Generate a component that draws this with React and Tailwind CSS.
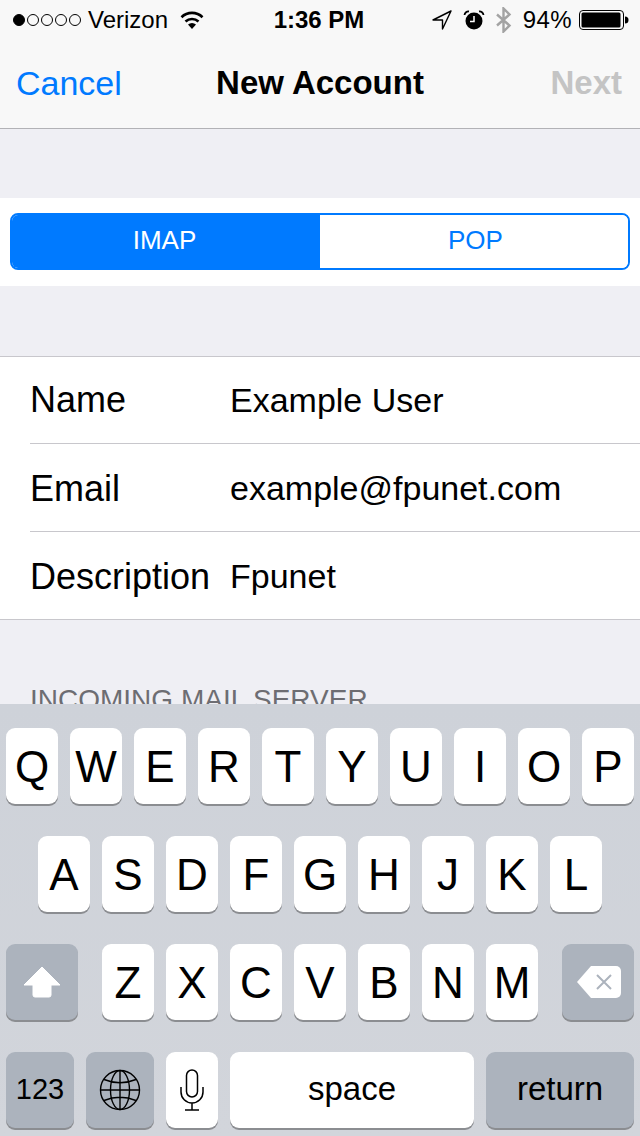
const row1 = ["Q", "W", "E", "R", "T", "Y", "U", "I", "O", "P"];
const row2 = ["A", "S", "D", "F", "G", "H", "J", "K", "L"];
const row3 = ["Z", "X", "C", "V", "B", "N", "M"];

const fields = [
  { label: "Name", value: "Example User", rowClass: "h-[87px] border-b border-[#c8c7cc]" },
  { label: "Email", value: "example@fpunet.com", rowClass: "h-[88px] pt-[2px] border-b border-[#c8c7cc]" },
  { label: "Description", value: "Fpunet", rowClass: "h-[87px] pt-[2px]" },
];

function Key({ children, dark, className = "" }) {
  return (
    <div
      className={`h-[76px] rounded-[9px] flex items-center justify-center text-black shadow-[0_2px_0_#8b8d91] ${dark ? "bg-[#acb3bd]" : "bg-white"} ${className}`}
    >
      {children}
    </div>
  );
}

function LetterKey({ letter }) {
  return (
    <Key className="w-[52px] pt-[2px] text-[44px] font-light leading-none">{letter}</Key>
  );
}

function StatusBar() {
  return (
    <div className="h-10 flex items-center text-[24px] leading-none text-black">
      <div className="flex-1 flex items-center pl-[13px]">
        <div className="flex gap-[2px]">
          <span className="w-[12px] h-[12px] rounded-full bg-black border border-black"></span>
          {[0, 1, 2, 3].map((i) => (
            <span key={i} className="w-[12px] h-[12px] rounded-full border border-black"></span>
          ))}
        </div>
        <span className="ml-[7px]">Verizon</span>
        <svg className="ml-[11px]" width="26" height="20" viewBox="0 0 26 20">
          <path d="M13 19 L9 14.6 A6 6 0 0 1 17 14.6 Z" fill="#000" />
          <path d="M6.5 11.5 A9.5 9.5 0 0 1 19.5 11.5" fill="none" stroke="#000" strokeWidth="2.6" />
          <path d="M2.5 7.2 A15 15 0 0 1 23.5 7.2" fill="none" stroke="#000" strokeWidth="2.6" />
        </svg>
      </div>
      <span className="font-bold mr-[4px]">1:36 PM</span>
      <div className="flex-1 flex items-center justify-end pr-[11px]">
        <svg width="20" height="20" viewBox="0 0 20 20">
          <path d="M19 1 L1 10 L10.5 10 L10.5 19 Z" fill="none" stroke="#000" strokeWidth="1.4" strokeLinejoin="round" />
        </svg>
        <svg className="ml-[11px]" width="22" height="20" viewBox="0 0 22 20">
          <circle cx="11" cy="11" r="8.5" fill="#000" />
          <path d="M11 6 V11.5 H7" fill="none" stroke="#fff" strokeWidth="1.5" />
          <path d="M1.5 5 A4 4 0 0 1 6 1.5 M20.5 5 A4 4 0 0 0 16 1.5" fill="none" stroke="#000" strokeWidth="1.8" />
        </svg>
        <svg className="ml-[10px]" width="17" height="26" viewBox="0 0 17 26">
          <path d="M2 7.5 L14.5 18.5 L8.5 24.5 V1.5 L14.5 7.5 L2 18.5" fill="none" stroke="#a3a3a3" strokeWidth="2.4" />
        </svg>
        <span className="ml-[11px] tracking-[0.4px] font-light">94%</span>
        <svg className="ml-[7px]" width="50" height="20" viewBox="0 0 50 20">
          <rect x="0.5" y="0.5" width="44" height="19" rx="3.5" fill="none" stroke="#000" />
          <rect x="2.5" y="2.5" width="39" height="15" rx="1.5" fill="#000" />
          <path d="M46 6.5 A3.5 3.5 0 0 1 46 13.5 Z" fill="#000" />
        </svg>
      </div>
    </div>
  );
}

function NavBar() {
  return (
    <div className="h-[89px] flex items-center justify-between pb-[3px] border-b border-[#b2b2b6] text-[34px] leading-none">
      <span className="w-[140px] pl-[16px] text-[#007aff]">Cancel</span>
      <span className="font-bold text-[33px] text-black">New Account</span>
      <span className="w-[140px] pr-[18px] text-right font-bold text-[33px] text-[#c4c4c4]">Next</span>
    </div>
  );
}

function Segments() {
  return (
    <div className="mt-[69px] h-[88px] bg-white pt-[15px] px-[10px]">
      <div className="w-full h-[57px] flex rounded-[8px] border-2 border-[#007aff] overflow-hidden text-[26px]">
        <div className="w-[308px] bg-[#007aff] text-white flex items-center justify-center pr-[3px] pb-[2px]">IMAP</div>
        <div className="flex-1 bg-white text-[#007aff] flex items-center justify-center pl-[3px] pb-[2px]">POP</div>
      </div>
    </div>
  );
}

function Fields() {
  return (
    <div className="mt-[70px] bg-white border-y border-[#c8c7cc]">
      {fields.map((f) => (
        <div key={f.label} className={`ml-[30px] flex items-center text-[34px] text-black ${f.rowClass}`}>
          <span className="w-[200px] text-[36px]">{f.label}</span>
          <span>{f.value}</span>
        </div>
      ))}
    </div>
  );
}

function Keyboard() {
  return (
    <div className="h-[432px] shrink-0 pt-6 px-[6px] flex flex-col gap-[32px] bg-gradient-to-b from-[#ced2d9] to-[#d2d5db]">
      <div className="flex gap-3">
        {row1.map((k) => <LetterKey key={k} letter={k} />)}
      </div>
      <div className="flex gap-3 justify-center">
        {row2.map((k) => <LetterKey key={k} letter={k} />)}
      </div>
      <div className="flex gap-3">
        <Key dark className="w-[72px] mr-3">
          <svg width="38" height="32" viewBox="0 0 38 32">
            <path d="M19 1 L37 19 H28 V29 A2 2 0 0 1 26 31 H12 A2 2 0 0 1 10 29 V19 H1 Z" fill="#fff" stroke="#fff" strokeLinejoin="round" />
          </svg>
        </Key>
        {row3.map((k) => <LetterKey key={k} letter={k} />)}
        <Key dark className="w-[72px] ml-3 pl-[1px]">
          <svg width="44" height="32" viewBox="0 0 44 32">
            <path d="M14 0 H39 A5 5 0 0 1 44 5 V27 A5 5 0 0 1 39 32 H14 L0 16 Z" fill="#fff" />
            <path d="M20 9 L34 23 M34 9 L20 23" stroke="#acb3bd" strokeWidth="2" />
          </svg>
        </Key>
      </div>
      <div className="flex gap-3">
        <Key dark className="w-[68px] text-[29px] font-light">123</Key>
        <Key dark className="w-[68px]">
          <svg width="42" height="42" viewBox="0 0 42 42" fill="none" stroke="#000" strokeWidth="1.4">
            <circle cx="21" cy="21" r="19.5" />
            <ellipse cx="21" cy="21" rx="9.5" ry="19.5" />
            <path d="M21 1.5 V40.5 M1.5 21 H40.5 M5 10.5 Q21 17 37 10.5 M5 31.5 Q21 25 37 31.5" />
          </svg>
        </Key>
        <Key className="w-[52px]">
          <svg width="24" height="42" viewBox="0 0 24 42" fill="none" stroke="#000" strokeWidth="1.5">
            <rect x="6.5" y="1" width="11" height="27" rx="5.5" />
            <path d="M1 18 V23 A11 11 0 0 0 23 23 V18 M12 34 V41 M5 41 H19" />
          </svg>
        </Key>
        <Key className="w-[244px] text-[33px] font-light pb-[2px]">space</Key>
        <Key dark className="w-[148px] text-[33px] font-light pb-[2px]">return</Key>
      </div>
    </div>
  );
}

export default function App() {
  return (
    <div className="w-[640px] h-[1136px] flex flex-col overflow-hidden bg-[#efeff4] font-['Liberation_Sans',Arial,sans-serif]">
      <div className="bg-[#f8f8f8] shrink-0">
        <StatusBar />
        <NavBar />
      </div>
      <div className="flex-1 min-h-0 overflow-hidden">
        <Segments />
        <Fields />
        <div className="mt-[66px] pl-[30px] text-[28px] leading-none text-[#6d6d72] whitespace-nowrap">INCOMING MAIL SERVER</div>
      </div>
      <Keyboard />
    </div>
  );
}
